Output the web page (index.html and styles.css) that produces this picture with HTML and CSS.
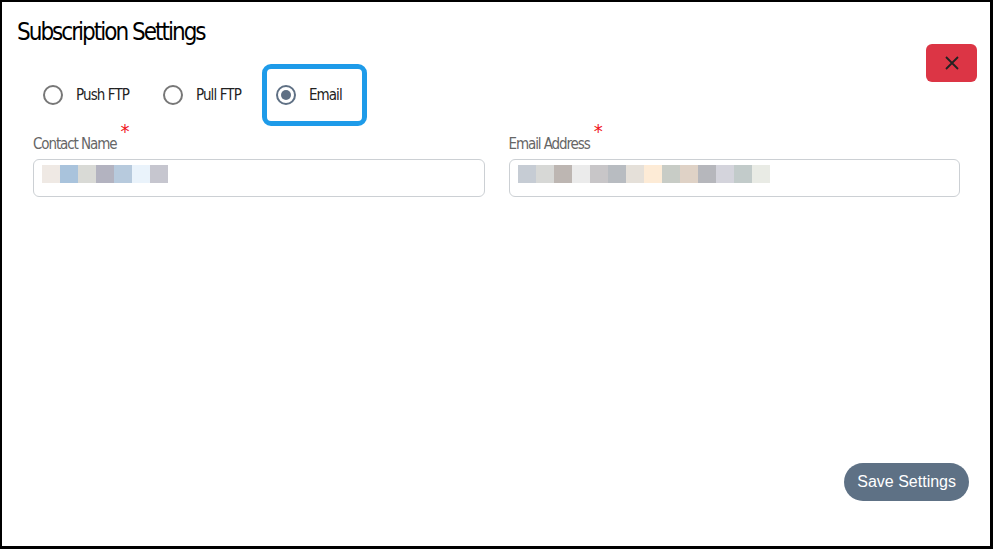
FILE: index.html
```html
<!DOCTYPE html>
<html>
<head>
<meta charset="utf-8">
<link rel="stylesheet" href="styles.css">
</head>
<body>
<div class="modal">
  <div class="header">
    <h1 class="title">Subscription Settings</h1>
    <button class="close" aria-label="Close">
      <svg width="16" height="16" viewBox="0 0 16 16"><path d="M2 2 L14 14 M14 2 L2 14" stroke="#222" stroke-width="1.8" fill="none"/></svg>
    </button>
  </div>
  <div class="radios">
    <label class="radio"><span class="dot"></span>Push FTP</label>
    <label class="radio"><span class="dot"></span>Pull FTP</label>
    <label class="radio selected"><span class="dot"></span>Email</label>
  </div>
  <div class="fields">
    <div class="field">
      <div class="label">Contact Name<span class="req">*</span></div>
      <div class="input">
        <span class="px" style="background:#efe9e4"></span><span class="px" style="background:#a9c3dc"></span><span class="px" style="background:#d9dad6"></span><span class="px" style="background:#b3b3c0"></span><span class="px" style="background:#b7cadd"></span><span class="px" style="background:#eaf3fb"></span><span class="px" style="background:#c6c6cf"></span>
      </div>
    </div>
    <div class="field">
      <div class="label">Email Address<span class="req">*</span></div>
      <div class="input">
        <span class="px" style="background:#c6ccd4"></span><span class="px" style="background:#d7d8d6"></span><span class="px" style="background:#bdb6b2"></span><span class="px" style="background:#ebebeb"></span><span class="px" style="background:#c8c6c8"></span><span class="px" style="background:#b8bcc1"></span><span class="px" style="background:#e5e0d9"></span><span class="px" style="background:#fdebd6"></span><span class="px" style="background:#c8ccc6"></span><span class="px" style="background:#dfd2c6"></span><span class="px" style="background:#b6b7bc"></span><span class="px" style="background:#d4d4dc"></span><span class="px" style="background:#c2cbca"></span><span class="px" style="background:#e9ebe5"></span>
      </div>
    </div>
  </div>
  <div class="footer">
    <button class="save">Save Settings</button>
  </div>
</div>
</body>
</html>
```
FILE: styles.css
```css
* { box-sizing: border-box; }
html, body { margin: 0; padding: 0; }
body { width: 993px; height: 549px; background: #fff; }
.modal {
  width: 993px;
  height: 549px;
  border: 2px solid #000;
  border-right-width: 3px;
  border-bottom-width: 3px;
  display: flex;
  flex-direction: column;
  font-family: "DejaVu Sans Condensed", "DejaVu Sans", sans-serif;
  font-stretch: condensed;
}
.header {
  display: flex;
  justify-content: space-between;
  align-items: flex-start;
  padding: 14px 13px 0 15px;
}
.title {
  margin: 0;
  font-weight: normal;
  font-size: 24px;
  line-height: 32px;
  color: #000;
  letter-spacing: -2px;
}
.close {
  margin-top: 28px;
  width: 51px;
  height: 38px;
  border: none;
  border-radius: 6px;
  background: #dc3545;
  display: flex;
  align-items: center;
  justify-content: center;
  padding: 0;
}
.radios {
  display: flex;
  align-items: center;
  gap: 20px;
  margin-top: -18px;
  padding-left: 41px;
}
.radio {
  display: flex;
  align-items: center;
  gap: 13px;
  font-size: 15px;
  letter-spacing: -0.9px;
  color: #222;
  height: 62px;
  padding-right: 14px;
}
.dot {
  width: 20px;
  height: 20px;
  border: 2px solid #777;
  border-radius: 50%;
  display: inline-block;
  position: relative;
  flex: none;
}
.radio.selected {
  border: 5px solid #1e9be9;
  border-radius: 9px;
  padding: 0 20px 0 9px;
  margin-left: -13px;
}
.radio.selected .dot { border-color: #5f7084; }
.radio.selected .dot::after {
  content: "";
  position: absolute;
  left: 3px; top: 3px;
  width: 10px; height: 10px;
  border-radius: 50%;
  background: #5f7084;
}
.fields {
  display: flex;
  gap: 24px;
  padding: 0 30px 0 31px;
}
.field { flex: 1; }
.label {
  font-size: 15px;
  letter-spacing: -1.1px;
  color: #666;
  line-height: 18px;
  margin-top: 6px;
  height: 27px;
  padding-bottom: 6px;
  display: flex;
  align-items: flex-end;
}
.req {
  color: #f0141b;
  font-size: 20px;
  align-self: flex-start;
  line-height: 10px;
  margin-left: 4px;
  margin-top: -6px;
}
.input {
  height: 38px;
  border: 1px solid #ccd0d4;
  border-radius: 6px;
  display: flex;
  padding: 5px 0 0 8px;
}
.px { width: 18px; height: 18px; display: inline-block; }
.footer {
  margin-top: auto;
  display: flex;
  justify-content: flex-end;
  padding: 0 21px 45px 0;
}
.save {
  height: 38px;
  padding: 0 13px;
  border: none;
  border-radius: 19px;
  background: #5e7185;
  color: #fff;
  font-family: "Liberation Sans", Arial, sans-serif;
  font-size: 16px;
}
```
